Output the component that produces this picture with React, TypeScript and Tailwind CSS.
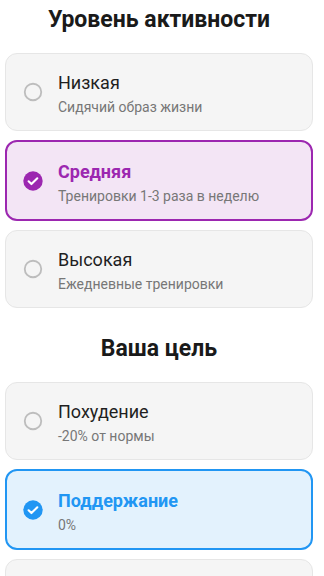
import React from "react";

type Opt = { title: string; sub: string; selected?: boolean };

const font = { fontFamily: "Roboto, 'Noto Sans', sans-serif" };

function Check({ color }: { color: string }) {
  return (
    <svg width="22" height="22" viewBox="0 0 24 24">
      <circle cx="12" cy="12" r="10.6" fill={color} />
      <path d="M7.2 12.3l3.1 3.1 6.4-6.4" fill="none" stroke="#fff" strokeWidth="2.3" strokeLinecap="round" strokeLinejoin="round" />
    </svg>
  );
}

function Radio() {
  return (
    <svg width="22" height="22" viewBox="0 0 24 24">
      <circle cx="12" cy="12" r="9" fill="none" stroke="#bdbdbd" strokeWidth="2" />
    </svg>
  );
}

function Card({ o, variant }: { o: Opt; variant: "purple" | "blue" }) {
  if (o.selected) {
    const purple = variant === "purple";
    return (
      <div
        className={
          purple
            ? "h-[81px] rounded-[12px] border-2 border-[#9c27b0] bg-[#f3e5f5] flex items-center pl-[15px]"
            : "h-[81px] rounded-[12px] border-2 border-[#2196f3] bg-[#e3f2fd] flex items-center pl-[15px]"
        }
      >
        <Check color={purple ? "#9c27b0" : "#2196f3"} />
        <div className="ml-[14px] mt-[4px] flex flex-col">
          <div className={purple ? "text-[18px] leading-[24px] font-bold text-[#9c27b0]" : "text-[18px] leading-[24px] font-bold text-[#2196f3]"}>
            {o.title}
          </div>
          <div className="text-[14px] leading-[20px] mt-[2px] text-[#777777]">{o.sub}</div>
        </div>
      </div>
    );
  }
  return (
    <div className="h-[78px] rounded-[12px] border border-[#e6e6e6] bg-[#f5f5f5] flex items-center pl-[16px]">
      <Radio />
      <div className="ml-[14px] mt-[4px] flex flex-col">
        <div className="text-[18px] leading-[24px] text-[#1f1f1f]">{o.title}</div>
        <div className="text-[14px] leading-[20px] mt-[2px] text-[#777777]">{o.sub}</div>
      </div>
    </div>
  );
}

export default function App() {
  const activity: Opt[] = [
    { title: "Низкая", sub: "Сидячий образ жизни" },
    { title: "Средняя", sub: "Тренировки 1-3 раза в неделю", selected: true },
    { title: "Высокая", sub: "Ежедневные тренировки" },
  ];
  const goal: Opt[] = [
    { title: "Похудение", sub: "-20% от нормы" },
    { title: "Поддержание", sub: "0%", selected: true },
  ];
  return (
    <div className="w-[324px] h-[576px] overflow-hidden bg-white" style={font}>
      <div className="pl-[5px] pr-[11px]">
        <div className="pt-[6px] text-center text-[23px] leading-[28px] font-bold text-[#1a1a1a]">Уровень активности</div>
        <div className="mt-[19px] flex flex-col gap-[9px]">
          {activity.map((o) => (
            <Card key={o.title} o={o} variant="purple" />
          ))}
        </div>
        <div className="mt-[27px] text-center text-[23px] leading-[28px] font-bold text-[#1a1a1a]">Ваша цель</div>
        <div className="mt-[19px] flex flex-col gap-[9px]">
          {goal.map((o) => (
            <Card key={o.title} o={o} variant="blue" />
          ))}
          <div className="h-[78px] rounded-[12px] border border-[#e6e6e6] bg-[#f5f5f5]" />
        </div>
      </div>
    </div>
  );
}
